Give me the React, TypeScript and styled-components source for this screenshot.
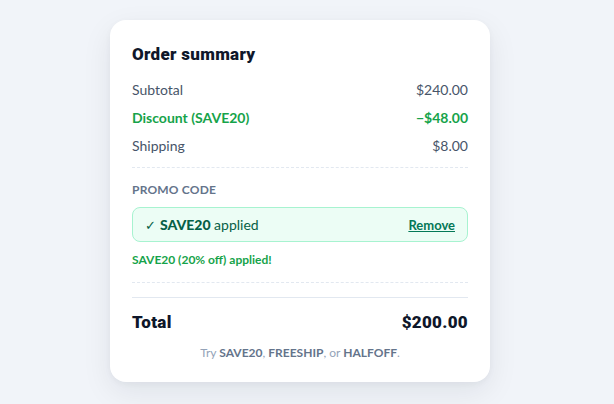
import React from "react";
import styled, { createGlobalStyle } from "styled-components";

const Global = createGlobalStyle`
  html, body { margin: 0; padding: 0; }
  body {
    background: #f1f4f9;
    font-family: "Segoe UI", Lato, "Noto Sans", sans-serif;
    width: 614px;
    height: 404px;
    overflow: hidden;
  }
`;

const Page = styled.div`
  width: 600px;
  display: flex;
  justify-content: center;
  padding-top: 20px;
`;

const Card = styled.div`
  width: 380px;
  box-sizing: border-box;
  background: #ffffff;
  border-radius: 16px;
  padding: 22px 22px 21px;
  box-shadow: 0 10px 30px rgba(15, 23, 42, 0.08), 0 2px 6px rgba(15, 23, 42, 0.04);
`;

const Title = styled.h2`
  margin: 0 0 9px;
  font-family: Roboto, sans-serif;
  font-size: 17px;
  font-weight: 900;
  letter-spacing: 0.3px;
  color: #0f172a;
  line-height: 24px;
`;

const Row = styled.div<{ $green?: boolean }>`
  display: flex;
  justify-content: space-between;
  align-items: center;
  height: 28px;
  font-size: 14px;
  color: ${(p) => (p.$green ? "#16a34a" : "#475569")};
  font-weight: ${(p) => (p.$green ? 700 : 400)};
`;

const Dashed = styled.hr<{ $top?: number }>`
  border: none;
  border-top: 1px dashed #e2e8f0;
  margin: ${(p) => p.$top ?? 8}px 0 0;
`;

const Label = styled.div`
  margin-top: 14px;
  line-height: 16px;
  font-size: 12px;
  font-weight: 700;
  color: #64748b;
  letter-spacing: 0.2px;
`;

const Applied = styled.div`
  margin-top: 9px;
  height: 35px;
  box-sizing: border-box;
  display: flex;
  align-items: center;
  justify-content: space-between;
  padding: 0 12px;
  background: #ecfdf5;
  border: 1px solid #a7f3d0;
  border-radius: 8px;
  font-size: 14px;
  color: #065f46;
  b { font-weight: 900; }
`;

const Check = styled.span`
  margin-right: 4px;
  font-family: "DejaVu Sans", sans-serif;
  font-size: 13px;
`;

const Remove = styled.button`
  border: none;
  background: none;
  padding: 0;
  font: inherit;
  font-size: 13px;
  font-weight: 700;
  color: #047857;
  text-decoration: underline;
  cursor: pointer;
`;

const Message = styled.div`
  margin-top: 10px;
  line-height: 16px;
  font-size: 12px;
  font-weight: 700;
  color: #16a34a;
`;

const Solid = styled.hr`
  border: none;
  border-top: 1px solid #e2e8f0;
  margin: 14px 0 0;
`;

const TotalRow = styled.div`
  display: flex;
  justify-content: space-between;
  align-items: center;
  margin-top: 13px;
  line-height: 22px;
  font-family: Roboto, sans-serif;
  font-size: 17px;
  font-weight: 900;
  letter-spacing: 0.3px;
  color: #0f172a;
`;

const Hint = styled.div`
  margin-top: 12px;
  line-height: 16px;
  text-align: center;
  font-size: 12px;
  color: #94a3b8;
  b { color: #64748b; font-weight: 700; }
`;

export default function App() {
  return (
    <>
      <Global />
      <Page>
        <Card>
          <Title>Order summary</Title>
          <Row>
            <span>Subtotal</span>
            <span>$240.00</span>
          </Row>
          <Row $green>
            <span>Discount (SAVE20)</span>
            <span>−$48.00</span>
          </Row>
          <Row>
            <span>Shipping</span>
            <span>$8.00</span>
          </Row>
          <Dashed />
          <Label>PROMO CODE</Label>
          <Applied>
            <span>
              <Check>✓</Check>
              <b>SAVE20</b> applied
            </span>
            <Remove>Remove</Remove>
          </Applied>
          <Message>SAVE20 (20% off) applied!</Message>
          <Dashed $top={14} />
          <Solid />
          <TotalRow>
            <span>Total</span>
            <span>$200.00</span>
          </TotalRow>
          <Hint>
            Try <b>SAVE20</b>, <b>FREESHIP</b>, or <b>HALFOFF</b>.
          </Hint>
        </Card>
      </Page>
    </>
  );
}
